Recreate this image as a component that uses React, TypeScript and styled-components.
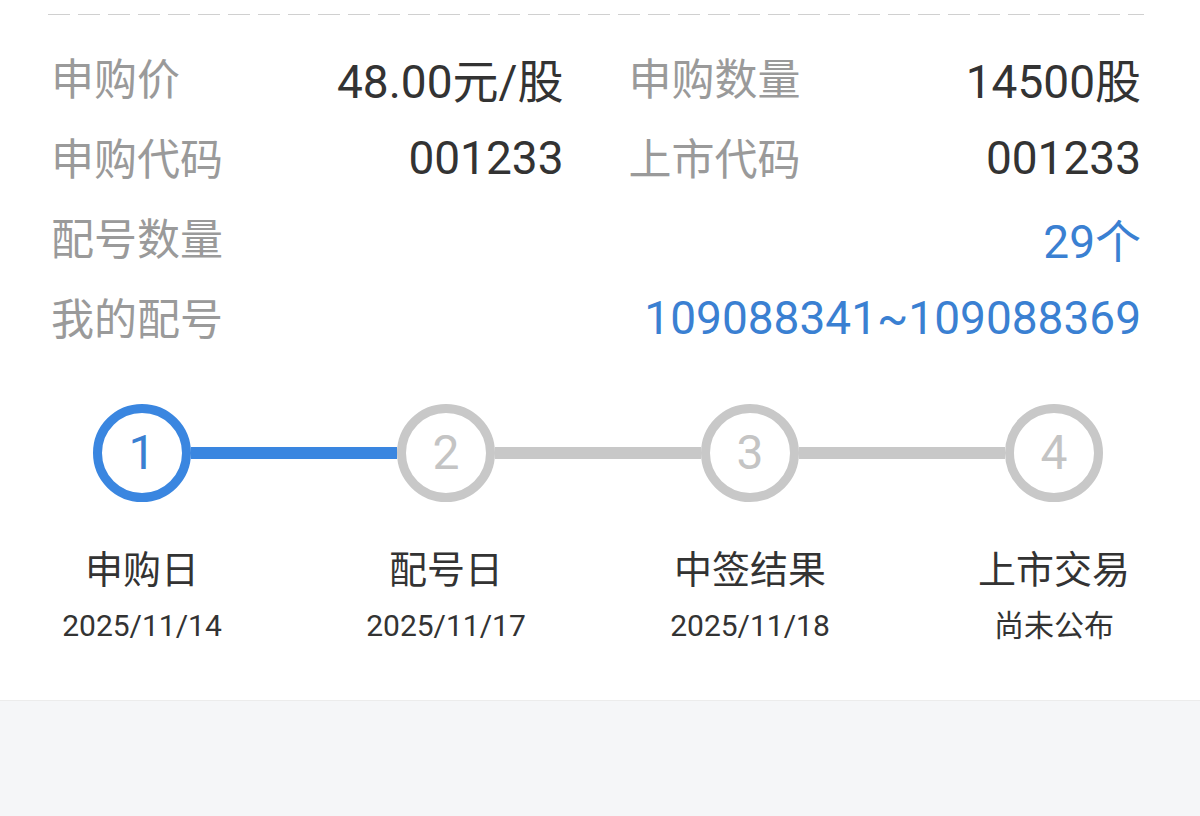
import React from 'react'
import styled, { createGlobalStyle } from 'styled-components'

const GlobalStyle = createGlobalStyle`
    html, body {
        margin: 0;
        padding: 0;
        background: #f5f6f8;
    }
    body {
        font-family: Roboto, "Noto Sans CJK SC", sans-serif;
        -webkit-font-smoothing: antialiased;
    }
`

type Info = { label: string; value: string; accent?: boolean }

const pairs: Info[][] = [
    [
        { label: '申购价', value: '48.00元/股' },
        { label: '申购数量', value: '14500股' },
    ],
    [
        { label: '申购代码', value: '001233' },
        { label: '上市代码', value: '001233' },
    ],
]

const wide: Info[] = [
    { label: '配号数量', value: '29个', accent: true },
    { label: '我的配号', value: '109088341~109088369', accent: true },
]

const steps = [
    { title: '申购日', date: '2025/11/14' },
    { title: '配号日', date: '2025/11/17' },
    { title: '中签结果', date: '2025/11/18' },
    { title: '上市交易', date: '尚未公布' },
]

const CURRENT = 0

export default function App() {
    return (
        <>
            <GlobalStyle />
            <Card>
                <Dashed />
                <InfoList>
                    {pairs.map((row, i) => (
                        <PairRow key={i}>
                            {row.map((item) => (
                                <Cell key={item.label}>
                                    <Label>{item.label}</Label>
                                    <Value>{item.value}</Value>
                                </Cell>
                            ))}
                        </PairRow>
                    ))}
                    {wide.map((item) => (
                        <Cell key={item.label}>
                            <Label>{item.label}</Label>
                            <Value $accent={item.accent}>{item.value}</Value>
                        </Cell>
                    ))}
                </InfoList>
                <Track>
                    {steps.map((s, i) => (
                        <React.Fragment key={s.title}>
                            {i > 0 && <Connector $done={i - 1 === CURRENT} />}
                            <Circle $active={i === CURRENT}>{i + 1}</Circle>
                        </React.Fragment>
                    ))}
                </Track>
                <Captions>
                    {steps.map((s) => (
                        <Caption key={s.title}>
                            <StepTitle>{s.title}</StepTitle>
                            <StepDate>{s.date}</StepDate>
                        </Caption>
                    ))}
                </Captions>
            </Card>
        </>
    )
}

const Card = styled.section`
    background: #ffffff;
    padding: 14px 59px 0 48px;
    border-bottom: 1px solid #ececec;
    overflow: hidden;
`

const Dashed = styled.div`
    height: 1px;
    margin-right: -3px;
    background: repeating-linear-gradient(to right, #d0d0d0 0 22px, transparent 22px 30px);
`

const InfoList = styled.div`
    margin-top: 21px;
    display: flex;
    flex-direction: column;
`

const PairRow = styled.div`
    display: grid;
    grid-template-columns: 1fr 1fr;
    column-gap: 62px;
`

const Cell = styled.div`
    display: flex;
    align-items: center;
    justify-content: space-between;
    height: 80px;
    padding-left: 3px;
`

const Label = styled.span`
    font-size: 43px;
    color: #9a9a9a;
`

const Value = styled.span<{ $accent?: boolean }>`
    font-size: 46px;
    padding-top: 4px;
    color: ${(p) => (p.$accent ? '#3a80d2' : '#333333')};
`

const Track = styled.div`
    display: flex;
    align-items: center;
    padding: 48px 0 0 45px;
`

const Circle = styled.div<{ $active?: boolean }>`
    box-sizing: border-box;
    width: 98px;
    height: 98px;
    flex: none;
    border-radius: 50%;
    border: 9px solid ${(p) => (p.$active ? '#3a86e0' : '#c8c8c8')};
    color: ${(p) => (p.$active ? '#3a80d2' : '#c4c4c4')};
    display: flex;
    align-items: center;
    justify-content: center;
    font-size: 48px;
    line-height: 1;
`

const Connector = styled.div<{ $done?: boolean }>`
    width: 206px;
    flex: none;
    height: 12px;
    background: ${(p) => (p.$done ? '#3a86e0' : '#c8c8c8')};
`

const Captions = styled.div`
    display: grid;
    grid-template-columns: repeat(4, 304px);
    margin-left: -58px;
    padding: 43px 0 52px;
`

const Caption = styled.div`
    display: flex;
    flex-direction: column;
    align-items: center;
    color: #333333;
`

const StepTitle = styled.div`
    font-size: 38px;
    line-height: 50px;
`

const StepDate = styled.div`
    margin-top: 9px;
    font-size: 30px;
    line-height: 44px;
`
